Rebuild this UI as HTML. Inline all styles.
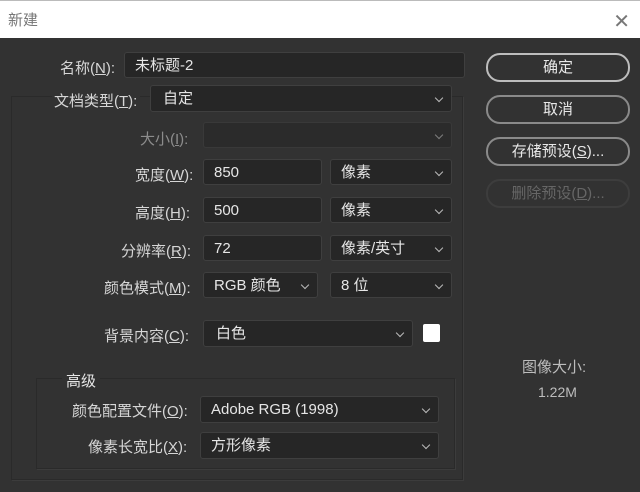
<!DOCTYPE html><html><head><meta charset="utf-8"><style>
body{margin:0;width:640px;height:492px;background:#323232;font-family:"Liberation Sans","Noto Sans CJK SC",sans-serif;position:relative;overflow:hidden;color:#d6d6d6;font-size:15px}
.t{position:absolute;left:0;top:0;width:640px;height:38px;background:#fff;border-top:1px solid #bbb;box-sizing:border-box}
.t span{position:absolute;left:8px;top:8px;color:#777;font-size:15px}
.t i{position:absolute;right:10px;top:8px;color:#777;font-style:normal;font-size:20px;font-weight:200}
.a{position:absolute}
.l{position:absolute;text-align:right;white-space:nowrap}
.f{position:absolute;background:#262626;border:1px solid #3f3f3f;border-radius:3px;box-sizing:border-box;padding-left:10px;line-height:25px;color:#e6e6e6}
.f.s::after{content:"";position:absolute;right:9px;top:9px;width:5px;height:5px;border-right:1.5px solid #bbb;border-bottom:1.5px solid #bbb;transform:rotate(45deg)}
.d{opacity:.55}
.b{position:absolute;left:486px;width:144px;height:29px;border:2px solid #8a8a8a;border-radius:14px;box-sizing:border-box;text-align:center;line-height:25px;color:#e8e8e8}
.box{position:absolute;border:1px solid #2a2a2a;box-shadow:1px 1px 0 #3c3c3c}
</style></head><body>
<div class="t"><span>新建</span><i>✕</i></div>
<div class="box" style="left:11px;top:96px;width:450px;height:382px"></div>
<div class="box" style="left:36px;top:378px;width:417px;height:89px"></div>
<div class="l" style="left:60px;top:57px">名称(<u>N</u>):</div>
<div class="f" style="left:124px;top:52px;width:341px;height:26px">未标题-2</div>
<div class="l" style="left:52px;top:90px;background:#323232;padding:0 3px 0 2px">文档类型(<u>T</u>):</div>
<div class="f s" style="left:150px;top:85px;width:302px;height:27px;padding-left:12px;line-height:26px">自定</div>
<div class="l d" style="left:140px;top:128px">大小(<u>I</u>):</div>
<div class="f s d" style="left:203px;top:122px;width:249px;height:26px"></div>
<div class="l" style="left:135px;top:164px">宽度(<u>W</u>):</div>
<div class="f" style="left:203px;top:159px;width:119px;height:26px">850</div>
<div class="f s" style="left:330px;top:159px;width:122px;height:26px">像素</div>
<div class="l" style="left:135px;top:202px">高度(<u>H</u>):</div>
<div class="f" style="left:203px;top:197px;width:119px;height:26px">500</div>
<div class="f s" style="left:330px;top:197px;width:122px;height:26px">像素</div>
<div class="l" style="left:121px;top:240px">分辨率(<u>R</u>):</div>
<div class="f" style="left:203px;top:235px;width:119px;height:26px">72</div>
<div class="f s" style="left:330px;top:235px;width:122px;height:26px">像素/英寸</div>
<div class="l" style="left:104px;top:277px">颜色模式(<u>M</u>):</div>
<div class="f s" style="left:203px;top:272px;width:115px;height:26px">RGB 颜色</div>
<div class="f s" style="left:330px;top:272px;width:122px;height:26px">8 位</div>
<div class="l" style="left:104px;top:325px">背景内容(<u>C</u>):</div>
<div class="f s" style="left:203px;top:320px;width:210px;height:27px;padding-left:12px;line-height:26px">白色</div>
<div class="a" style="left:423px;top:324px;width:17px;height:18px;background:#fff;border-radius:2px"></div>
<div class="l" style="left:62px;top:370px;background:#323232;padding:0 4px;color:#e6e6e6">高级</div>
<div class="l" style="left:72px;top:400px">颜色配置文件(<u>O</u>):</div>
<div class="f s" style="left:200px;top:396px;width:239px;height:27px;line-height:26px">Adobe RGB (1998)</div>
<div class="l" style="left:88px;top:436px">像素长宽比(<u>X</u>):</div>
<div class="f s" style="left:200px;top:432px;width:239px;height:27px;line-height:26px">方形像素</div>
<div class="b" style="top:53px;border-color:#bdbdbd">确定</div>
<div class="b" style="top:95px">取消</div>
<div class="b" style="top:137px">存储预设(<u>S</u>)...</div>
<div class="b" style="top:179px;border-color:#3d3d3d;color:#666">删除预设(<u>D</u>)...</div>
<div class="l" style="left:522px;top:356px;color:#bdbdbd">图像大小:</div>
<div class="l" style="left:538px;top:384px;color:#bdbdbd;font-size:14px">1.22M</div>
</body></html>
